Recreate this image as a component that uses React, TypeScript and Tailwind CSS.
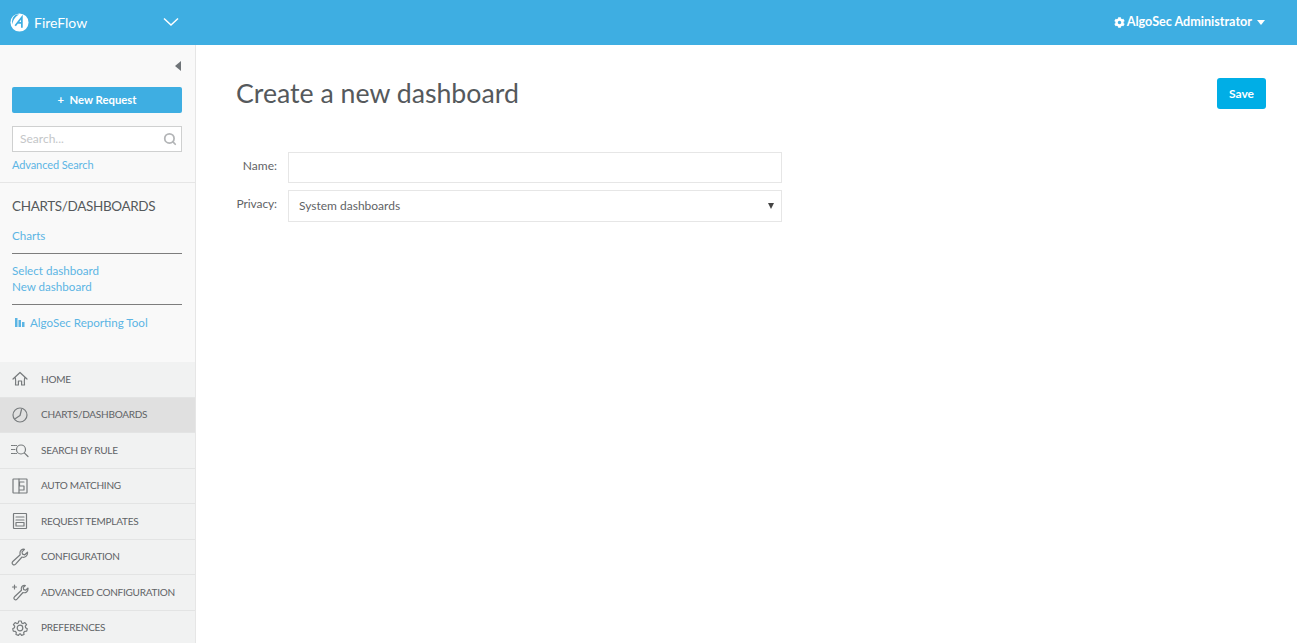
import { Search } from "lucide-react";
import { FaCog } from "react-icons/fa";
import type { ReactNode } from "react";

const font = { fontFamily: '"Lato", "Noto Sans", sans-serif' };

function NavIcon({ children }: { children: ReactNode }) {
  return (
    <svg viewBox="0 0 18 18" width="18" height="18" fill="none" stroke="#777b7d" strokeWidth="1.2" strokeLinecap="round" strokeLinejoin="round">
      {children}
    </svg>
  );
}

const navItems: { label: string; active?: boolean; icon: ReactNode }[] = [
  {
    label: "HOME",
    icon: (
      <path d="M2 9 9 2.500 16 9M4.300 7.500c.5 2.500.5 5 .2 7.500h2.900v-4h3.200v4h2.900c-.3-2.500-.3-5 .2-7.500" />
    ),
  },
  {
    label: "CHARTS/DASHBOARDS",
    active: true,
    icon: (
      <>
        <circle cx="9" cy="9" r="7" />
        <path d="M10.500 3.500 9 9.500 4.500 12.500" />
      </>
    ),
  },
  {
    label: "SEARCH BY RULE",
    icon: (
      <>
        <path d="M.5 4.500h5M.5 8.500h3.500M.5 12.500h5" strokeDasharray="1.200 1" />
        <circle cx="10" cy="8.500" r="4.500" />
        <path d="m13.300 11.800 3.700 3.700" />
      </>
    ),
  },
  {
    label: "AUTO MATCHING",
    icon: (
      <>
        <rect x="2" y="2" width="14" height="14" rx="0.500" />
        <path d="M8 2v14M13 5H8.500V9H13V13H8" />
      </>
    ),
  },
  {
    label: "REQUEST TEMPLATES",
    icon: (
      <>
        <rect x="2.500" y="1.500" width="13" height="15" rx="0.500" />
        <path d="M5 5h8M5 8h8" />
        <rect x="5" y="10.500" width="8" height="3.500" />
      </>
    ),
  },
  {
    label: "CONFIGURATION",
    icon: (
      <path d="M16.500 4.200 13.800 6.800 11.500 6.200 11 3.800 13.500 1.300C11.200.8 8.800 2.300 9 5.200c0 .8.200 1.300.2 1.600L1.800 13.500c-1 1-.8 2 0 2.800s1.800.9 2.800-.1L11 9c2.800 1 6-1 5.500-4.800Z" />
    ),
  },
  {
    label: "ADVANCED CONFIGURATION",
    icon: (
      <>
        <path d="M17 5 14.800 7.200 12.700 6.700 12.200 4.600 14.300 2.500C12.300 2 10.100 3.300 10.300 5.800c0 .7.200 1.200.2 1.500L3.500 13.800c-.9.900-.700 1.800 0 2.500s1.600.8 2.500-.1L12 9.500c2.500.9 5.400-.9 5-4.500Z" />
        <path d="M3.500 2v4M1.500 4h4" />
      </>
    ),
  },
  {
    label: "PREFERENCES",
    icon: (
      <>
        <circle cx="9" cy="9" r="2.800" />
        <path d="M7.700 2h2.600l.4 2 1.400.6 1.800-1 1.700 2-1.300 1.600.3 1.600 1.700.9-.6 2.500-2 .1-1 1.200.3 2-2.400.9-1.200-1.600H8.600l-1.200 1.600-2.400-.9.3-2-1-1.200-2-.1-.6-2.500 1.700-.9.3-1.600-1.300-1.600 1.700-2 1.800 1 1.400-.6z" />
      </>
    ),
  },
];

function Header() {
  return (
    <header className="h-[45px] bg-[#3eaee2] flex items-center text-white shrink-0">
      <div className="w-[196px] flex items-center pl-[10px] pr-[18px]">
        <svg viewBox="0 0 20 20" width="19" height="19">
          <circle cx="10" cy="10" r="9.500" fill="#fff" />
          <path d="M6.500 1.500C3 3.500 1.500 7.500 2.500 12 3 8 5 4 9.500 1.500Z" fill="#3eaee2" />
          <path d="M5.500 13.500 12.500 4.500V15.500M8.500 10.500H12.500" fill="none" stroke="#3eaee2" strokeWidth="1.800" />
        </svg>
        <span className="ml-[5px] text-[14px] leading-none">FireFlow</span>
        <svg viewBox="0 0 16 10" width="16" height="10" fill="none" stroke="#fff" strokeWidth="1.500" className="ml-auto mr-[-1px] mt-[-2px]">
          <path d="M1 1.500 8 8l7-6.500" />
        </svg>
      </div>
      <div className="ml-auto flex items-center pr-[32px] text-[12.600px] font-bold">
        <FaCog size={11} className="mr-[2px]" />
        <span>AlgoSec Administrator</span>
        <span className="ml-[5px] w-0 h-0 border-x-[4px] border-x-transparent border-t-[5px] border-t-white" />
      </div>
    </header>
  );
}

function Sidebar() {
  return (
    <aside className="w-[196px] shrink-0 bg-[#f9f9f9] border-r border-[#e6e6e6] overflow-hidden text-[11.600px]">
      <div className="h-[42px] flex items-center justify-end pr-[14px]">
        <span className="w-0 h-0 border-y-[5.500px] border-y-transparent border-r-[6px] border-r-[#6f7478]" />
      </div>
      <div className="pl-[12px] pr-[13px]">
        <button className="w-full h-[26px] rounded-[2px] bg-[#3eaee2] text-white font-bold text-[11.300px]">+&nbsp; New Request</button>
        <div className="mt-[13px] h-[26px] bg-white border border-[#cfd0d0] flex items-center pl-[7px] pr-[4px] text-[#c4c6c8]">
          <span className="text-[12px]">Search...</span>
          <Search size={14} strokeWidth={3} className="ml-auto text-[#b3b5b7]" />
        </div>
        <a className="block mt-[6px] text-[#5cb5e4] text-[11px] tracking-[-0.1px] leading-[14px]">Advanced Search</a>
      </div>
      <div className="mt-[10px] border-t border-[#e6e6e6] pl-[12px] pr-[13px]">
        <h2 className="mt-[14px] text-[13.500px] tracking-[-0.35px] leading-[18px] text-[#55595c]">CHARTS/DASHBOARDS</h2>
        <a className="block mt-[13px] text-[#5cb5e4] leading-[16px]">Charts</a>
        <div className="mt-[9px] border-t border-[#7d7d7d]" />
        <a className="block mt-[9px] text-[#5cb5e4] leading-[16px]">Select dashboard</a>
        <a className="block text-[#5cb5e4] leading-[16px]">New dashboard</a>
        <div className="mt-[9px] border-t border-[#7d7d7d]" />
        <div className="mt-[10px] flex items-center pl-[3px] text-[#5cb5e4] leading-[16px]">
          <svg viewBox="0 0 10 9" width="10" height="9" fill="#5cb5e4" className="mr-[5px] mt-[-2px]">
            <rect x="0" y="0" width="2.500" height="9" />
            <rect x="3.500" y="2" width="2.500" height="7" />
            <rect x="7" y="4" width="2.500" height="5" />
          </svg>
          AlgoSec Reporting Tool
        </div>
      </div>
      <nav className="mt-[31px]">
        {navItems.map((item) => (
          <div
            key={item.label}
            className={`h-[35.500px] flex items-center pl-[11px] border-b border-[#e3e4e4] text-[10px] tracking-[-0.25px] text-[#5f6366] ${
              item.active ? "bg-[#e0e0e0]" : "bg-[#f1f2f2]"
            }`}
          >
            <NavIcon>{item.icon}</NavIcon>
            <span className="ml-[12px]">{item.label}</span>
          </div>
        ))}
      </nav>
    </aside>
  );
}

export default function App() {
  return (
    <div className="h-screen flex flex-col overflow-hidden bg-white" style={font}>
      <Header />
      <div className="flex flex-1 min-h-0">
        <Sidebar />
        <main className="flex-1 pl-[40px] pr-[31px] pt-[33px]">
          <div className="flex items-start justify-between">
            <h1 className="text-[26.700px] leading-[30px] text-[#55595c]">Create a new dashboard</h1>
            <button className="w-[49px] h-[31px] rounded-[3px] bg-[#00aee6] text-white font-bold text-[12px]">Save</button>
          </div>
          <form className="mt-[43px] w-[546px] flex flex-col gap-[7px] text-[12px] text-[#5f6366]">
            <div className="flex items-start">
              <label className="w-[41px] text-right mt-[5px]">Name:</label>
              <div className="ml-[11px] flex-1 h-[31px] border border-[#e6e6e6] bg-white" />
            </div>
            <div className="flex items-start">
              <label className="w-[41px] text-right mt-[5px] tracking-[-0.1px]">Privacy:</label>
              <div className="ml-[11px] flex-1 h-[32px] border border-[#e6e6e6] bg-white flex items-center pl-[10px] pr-[7px]">
                <span className="mt-[-1px]">System dashboards</span>
                <span className="ml-auto w-0 h-0 border-x-[3px] border-x-transparent border-t-[6px] border-t-[#444]" />
              </div>
            </div>
          </form>
        </main>
      </div>
    </div>
  );
}
